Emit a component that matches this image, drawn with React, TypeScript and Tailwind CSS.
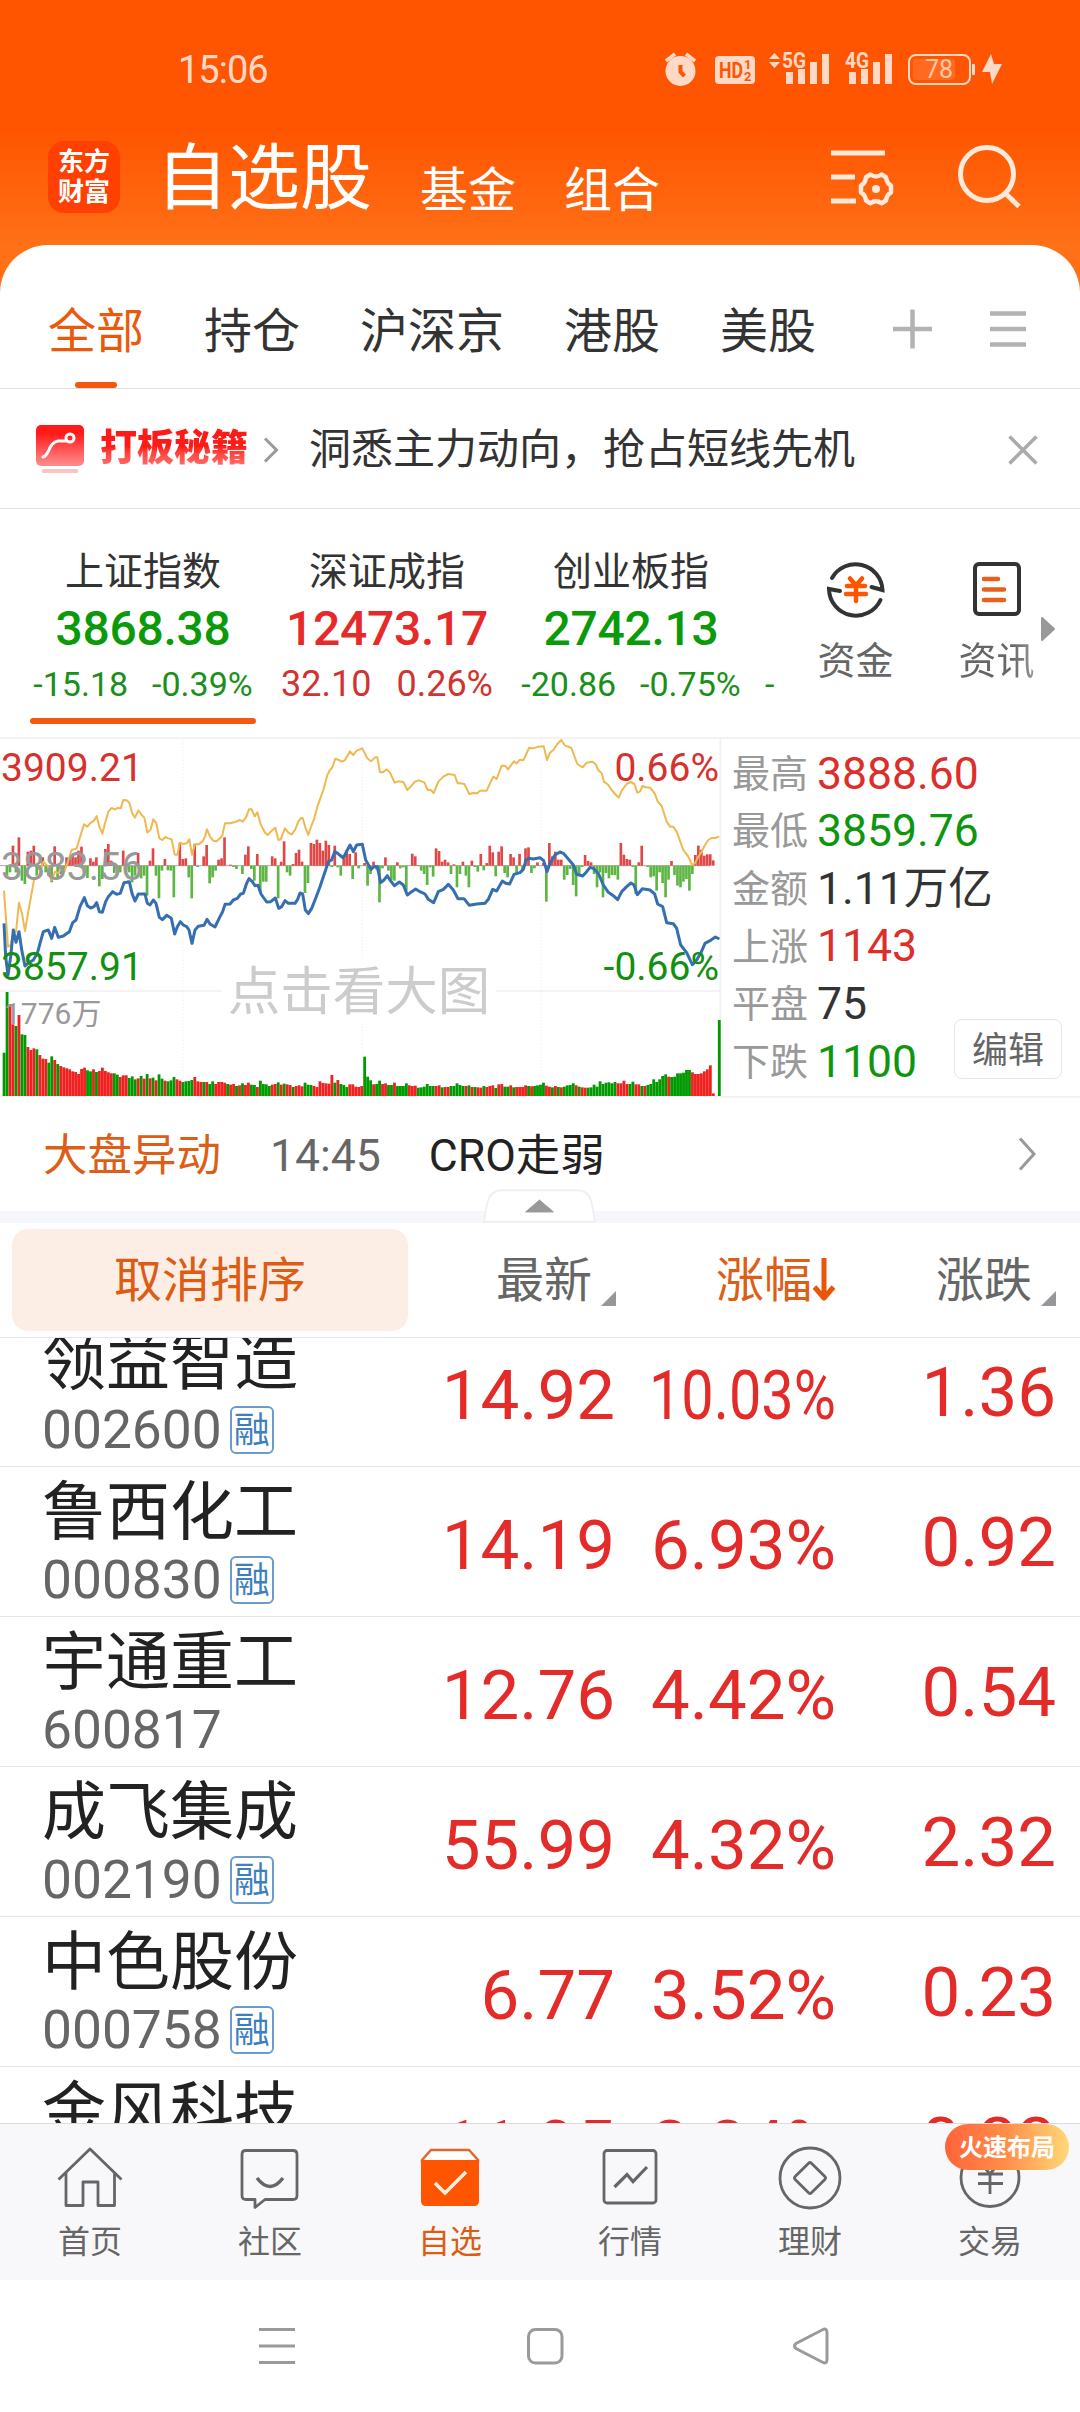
import type { ReactNode } from 'react';
import clsx from 'clsx';

type Stock = {
  name: string;
  code: string;
  margin?: boolean;
  price: string;
  percent: string;
  change: string;
};

const stocks: Stock[] = [
  { name: '领益智造', code: '002600', margin: true, price: '14.92', percent: '10.03%', change: '1.36' },
  { name: '鲁西化工', code: '000830', margin: true, price: '14.19', percent: '6.93%', change: '0.92' },
  { name: '宇通重工', code: '600817', price: '12.76', percent: '4.42%', change: '0.54' },
  { name: '成飞集成', code: '002190', margin: true, price: '55.99', percent: '4.32%', change: '2.32' },
  { name: '中色股份', code: '000758', margin: true, price: '6.77', percent: '3.52%', change: '0.23' },
  { name: '金风科技', code: '002202', margin: true, price: '11.95', percent: '2.84%', change: '0.33' },
];

const indices = [
  { name: '上证指数', value: '3868.38', diff: '-15.18', pct: '-0.39%', up: false, active: true },
  { name: '深证成指', value: '12473.17', diff: '32.10', pct: '0.26%', up: true, active: false },
  { name: '创业板指', value: '2742.13', diff: '-20.86', pct: '-0.75%', up: false, active: false },
];

const stats = [
  { label: '最高', value: '3888.60', color: 'text-[#dc2e2b]' },
  { label: '最低', value: '3859.76', color: 'text-[#0f960f]' },
  { label: '金额', value: '1.11万亿', color: 'text-[#333]' },
  { label: '上涨', value: '1143', color: 'text-[#dc2e2b]' },
  { label: '平盘', value: '75', color: 'text-[#333]' },
  { label: '下跌', value: '1100', color: 'text-[#0f960f]' },
];

// Minute bars round the zero line, up is positive
const momentum = [
  0, -30, -20, 60, -20, 85, -45, -55, 42, 45, 60, -30, -12, 25, -20, -30, -50, 58, -40, -25,
  -18, 25, 22, 30, 25, 45, 57, -20, -37, 22, 12, 25, -62, -40, 50, 65, 15, -22, -18, -20,
  45, -15, -20, -50, -30, 38, -38, -30, -90, 15, 52, -30, -98, -15, 20, -14, -15, -95, 0, 68,
  20, 22, -35, -98, 65, -4, 0, 28, 62, -53, -35, -15, 18, 22, 85, 0, 3, -4, -10, 0,
  -25, 33, 58, -10, -45, 35, -82, -48, -48, 0, 28, 22, -98, 12, 73, -20, -30, 5, 38, 48,
  12, -82, -52, 68, 65, 78, 68, 45, 75, 62, -4, 60, -5, -30, 20, 45, 35, -40, 40, -8,
  0, 8, -60, -25, 12, -12, -110, -8, 25, -15, -42, -45, 10, -8, -5, -75, 0, 36, 28, 2,
  -15, -25, -58, -5, -33, 52, 44, 12, 18, 10, -25, 4, -65, -25, 12, -30, -65, 15, -4, -18,
  35, -14, 8, 60, 40, -32, 42, 58, -22, -35, 35, 25, -22, 35, -15, 52, 55, -22, -8, 10,
  0, 8, -108, 68, 28, 42, 18, 18, -42, -28, -10, -58, -92, -30, -4, 32, 14, 10, -25, -65,
  -20, -95, -22, -38, -28, -28, -42, 68, 33, 20, 18, -4, -85, 10, 60, 0, -4, -35, -32, -75,
  -20, -52, -95, -42, 14, -28, -60, -65, -48, -40, -75, -25, 32, 60, 48, 30, 34, 34, 16,
];

// Volume per minute, negative values are drawn in green
const volume = [
  -130, -312, 275, 215, -210, 243, -185, -183, 147, 138, 143, -140, 123, 112, 111, -100, -119, 108, -96, 90,
  86, 83, 80, 74, 72, 66, 81, 85, -77, -74, 80, -72, 75, 85, 75, 71, 68, -68, -64, 57,
  62, 62, -54, -59, -50, 53, -60, 52, -66, 53, -55, 47, -65, -52, 46, -44, -47, -57, 50, 46,
  -42, -44, -45, -48, 57, 44, 42, -42, 42, -36, -44, 36, 42, 42, 40, -36, 34, 36, -30, 32,
  -38, 33, 40, -34, -33, 27, -46, -36, -35, -30, 34, 36, -41, 34, -37, 35, 33, -27, 30, 32,
  29, -40, -34, -33, 30, 27, 44, 39, 38, 37, 63, -40, 48, -36, -33, -27, 35, 35, 28, 27,
  30, -118, -58, -47, 35, -36, -46, 36, 38, -33, -33, 40, -30, -30, -30, -38, 32, 30, 31, -25,
  -26, -28, -36, -30, -30, 30, 32, -26, 27, 27, -30, -30, -38, -33, -30, 30, -32, 27, -27, 26,
  25, -30, 27, 30, 32, -24, 35, 36, -28, -28, 32, -26, 27, 27, 27, 32, -30, 29, -30, -32,
  -34, -40, 31, 28, -26, 30, -27, 26, -28, -32, -33, -38, 32, -28, 26, 25, -25, -26, -34, -28,
  -44, -36, -40, -41, -38, -42, 38, 38, 46, 36, -36, -43, 35, 35, -30, 30, -33, -36, -50, -42,
  -50, -60, -65, 58, -57, -58, -68, -68, -70, -78, -78, 71, 66, 66, 68, 74, 80, 92, 8, 0, -228,
];

const avgLine =
  '12,482 24,650 32,645 40,610 48,605 57,518 66,550 75,603 84,550 102,450 120,430 130,395 145,410 155,450 165,425 175,430 184,415 193,425 202,400 215,360 230,355 245,305 252,283 262,290 270,280 282,272 290,258 298,290 307,311 315,280 325,245 335,234 345,238 352,234 362,235 370,210 380,211 388,218 396,248 405,263 415,241 425,255 433,263 442,308 452,298 460,268 469,280 478,325 487,330 496,321 505,325 515,328 524,374 532,374 540,338 550,342 560,340 568,328 576,374 585,342 596,343 607,335 615,320 621,298 630,320 640,332 650,334 660,325 667,316 675,280 690,280 705,276 720,270 728,275 738,262 747,238 755,238 764,259 772,247 782,283 795,308 803,315 815,302 826,293 835,330 842,328 855,295 865,308 875,313 885,300 895,275 902,265 908,264 916,292 925,315 935,285 943,265 952,230 970,180 982,135 990,120 997,112 1006,86 1016,90 1027,95 1035,90 1050,64 1060,75 1070,62 1087,55 1102,85 1113,94 1125,82 1132,82 1140,127 1148,127 1160,118 1170,128 1184,158 1195,154 1210,156 1222,180 1232,170 1245,155 1255,151 1273,157 1283,180 1292,180 1301,189 1315,155 1330,140 1345,132 1364,135 1373,160 1382,160 1393,162 1408,192 1420,189 1432,190 1440,182 1460,182 1470,160 1480,140 1490,147 1505,107 1515,107 1524,118 1542,94 1550,100 1560,89 1570,91 1587,54 1600,55 1615,50 1631,49 1641,90 1650,68 1660,60 1672,42 1684,30 1694,46 1714,54 1722,75 1732,102 1748,112 1760,98 1777,95 1787,103 1795,120 1805,130 1812,155 1825,165 1835,180 1848,195 1856,203 1865,182 1880,162 1892,156 1903,162 1912,188 1920,185 1927,168 1938,172 1950,173 1964,190 1973,214 1985,228 2000,275 2010,290 2020,290 2030,305 2050,360 2065,380 2076,405 2085,400 2092,385 2102,370 2115,345 2125,330 2135,324 2145,324 2158,320';

const priceLine =
  '12,580 17,680 24,735 32,680 40,600 48,637 57,605 66,665 75,708 84,700 100,690 112,670 120,640 130,605 145,600 155,625 164,592 175,622 190,618 208,605 218,578 228,570 240,530 253,503 262,527 272,534 282,530 290,518 298,545 307,547 317,515 325,500 338,485 350,493 361,490 372,458 388,455 396,490 405,513 415,492 435,492 442,520 450,525 460,510 468,520 478,562 487,569 500,556 514,565 524,612 532,590 541,575 550,585 560,590 567,600 576,640 585,600 595,589 612,586 621,568 630,582 645,591 660,560 668,545 675,523 690,522 700,510 712,505 722,492 730,490 740,460 747,446 757,455 765,467 774,466 783,492 800,516 812,515 826,504 836,535 845,530 855,512 865,520 885,520 893,508 900,489 908,492 916,540 925,551 935,535 945,510 960,470 970,440 985,395 995,390 1004,365 1013,370 1030,384 1042,360 1050,345 1060,365 1070,345 1087,343 1097,390 1113,418 1122,410 1132,410 1142,458 1152,450 1162,437 1170,450 1183,467 1198,456 1210,465 1222,495 1235,485 1247,477 1260,485 1275,492 1285,508 1301,518 1315,485 1330,478 1345,463 1360,480 1374,506 1392,506 1408,526 1430,522 1455,520 1465,508 1478,478 1490,483 1507,453 1517,460 1529,462 1542,433 1560,428 1570,418 1578,390 1587,385 1600,387 1620,383 1631,392 1641,425 1650,400 1665,375 1680,366 1690,370 1705,387 1720,405 1730,433 1748,438 1760,425 1770,412 1780,415 1795,430 1810,465 1825,487 1840,497 1853,509 1865,485 1880,470 1893,459 1902,465 1912,494 1927,476 1950,480 1964,492 1973,522 1988,530 2000,578 2020,581 2030,595 2042,645 2060,668 2077,704 2090,690 2102,670 2115,640 2130,632 2146,621 2158,627';

function StatusBar() {
  return (
    <div className="flex h-[138px] items-start justify-between pr-[76px] pl-[178px] text-[#ffd9c6]">
      <span className="mt-[51px] text-[38px] leading-[38px] tracking-[-1px]">15:06</span>
      <svg className="mt-[48px]" width="340" height="40" viewBox="664 48 340 40" fill="currentColor">
        {/* alarm */}
        <circle cx="680.5" cy="71" r="15" />
        <path d="M666 61l9-7M695 61l-9-7" stroke="currentColor" strokeWidth="3.5" />
        <path d="M680.5 65v7l4 4" stroke="#ff5500" strokeWidth="4" fill="none" />
        {/* HD */}
        <rect x="715" y="56" width="40" height="28" rx="4" />
        <text x="719" y="78" fontSize="22" fontWeight="700" fill="#ff5500" textLength="24" lengthAdjust="spacingAndGlyphs">HD</text>
        <text x="744" y="69" fontSize="13" fontWeight="700" fill="#ff5500">1</text>
        <text x="744" y="81" fontSize="13" fontWeight="700" fill="#ff5500">2</text>
        {/* 5G */}
        <path d="M769 59l5.500-6 5.500 6zM769 62h11l-5.500 6z" />
        <text x="782" y="68" fontSize="22" fontWeight="700" textLength="24" lengthAdjust="spacingAndGlyphs">5G</text>
        <path d="M786 72h7v12h-7zM798 69h7v15h-7zM810 62h7v22h-7zM822 54h7v30h-7z" />
        {/* 4G */}
        <text x="845" y="68" fontSize="22" fontWeight="700" textLength="24" lengthAdjust="spacingAndGlyphs">4G</text>
        <path d="M849 72h7v12h-7zM861 69h7v15h-7zM873 62h7v22h-7zM885 54h7v30h-7z" />
        {/* battery */}
        <rect x="909" y="55" width="61" height="29" rx="7" fill="none" stroke="currentColor" strokeWidth="2" />
        <rect x="913" y="59" width="42" height="21" rx="3" fill="#ff6a20" />
        <text x="925" y="78" fontSize="25" textLength="28" fill="#ffc9a8">78</text>
        <rect x="972" y="64" width="3" height="11" rx="1" />
        <path d="M991 54l-9 18h8l2 12 10-20h-8z" />
      </svg>
    </div>
  );
}

function TitleBar() {
  return (
    <div className="flex h-[107px] items-start text-white">
      <div className="mt-[3px] ml-12 flex h-[72px] w-[72px] flex-col items-center justify-center rounded-2xl bg-[#ff4000] text-[26px] leading-[30px] font-bold">
        <span>东方</span>
        <span>财富</span>
      </div>
      <div className="ml-9 flex items-start gap-12">
        <span className="text-[72px] leading-[82px]">自选股</span>
        <span className="pt-[25px] text-[48px] leading-[56px]">基金</span>
        <span className="pt-[25px] text-[48px] leading-[56px]">组合</span>
      </div>
      <svg className="mt-[4px] ml-[168px]" width="202" height="72" viewBox="828 142 202 72" fill="none" stroke="#ffe9da" strokeWidth="5">
        <path d="M831 153h54M831 177h24M831 201h25" />
        <path
          d="M870.500 174.500q5.500 4 11 0l4.500 2.700q.8 6.300 5 8.300v7q-4.200 2-5 8l-4.500 2.700q-5.500-4-11 0l-4.500-2.700q-.8-6-5-8v-7q4.200-2 5-8.300z"
          strokeLinejoin="round"
          strokeWidth="4.500"
        />
        <circle cx="876" cy="189" r="4" fill="#ffe9da" stroke="none" />
        <circle cx="987" cy="174" r="26.500" />
        <path d="M1005 193l14 13.500" />
      </svg>
    </div>
  );
}

function GroupTabs() {
  return (
    <div className="flex h-[144px] items-center rounded-t-[48px] border-b border-[#dedede] bg-white pl-12 text-[48px] text-[#333]">
      <div className="flex h-full gap-[60px] leading-[173px]">
        <div className="flex h-full flex-col items-center justify-between text-[#ea5a0c]">
          <span className="h-[136px]">全部</span>
          <span className="h-[6px] w-[42px] shrink-0 rounded-full bg-[#f4580c]" />
        </div>
        <span>持仓</span>
        <span>沪深京</span>
        <span>港股</span>
        <span>美股</span>
      </div>
      <svg className="mt-6 ml-[77px]" width="133" height="40" viewBox="893 308 133 40" stroke="#b3b3b3" fill="none">
        <path d="M893 328h39M912.500 308.500v39" strokeWidth="4.500" />
        <path d="M990 312.500h36M990 328h36M990 343.500h36" strokeWidth="4.500" />
      </svg>
    </div>
  );
}

function Banner() {
  return (
    <div className="flex h-[120px] items-center border-b border-[#e0e0e0] bg-white pl-9">
      <svg width="48" height="50" viewBox="0 0 48 50" fill="none">
        <defs>
          <linearGradient id="promo" x1="0" y1="0" x2="0" y2="1">
            <stop offset="0.200" stopColor="#ff1a1a" />
            <stop offset="1" stopColor="#ff8f8f" />
          </linearGradient>
        </defs>
        <rect y="1" width="48" height="41" rx="5" fill="url(#promo)" />
        <rect x="6" y="45" width="36" height="4" rx="1" fill="#f9c4c4" />
        <path d="M7 33c7-2 5-14 15-16h8" stroke="#fff" strokeWidth="3" strokeLinecap="round" />
        <circle cx="34" cy="14" r="4" stroke="#fff" strokeWidth="3" />
      </svg>
      <span className="mt-px ml-4 bg-gradient-to-b from-[#ff1a1a] from-45% to-[#ff8080] bg-clip-text text-[37px] leading-[48px] font-black text-transparent">
        打板秘籍
      </span>
      <svg className="mt-[2px] ml-[15px]" width="16" height="26" viewBox="0 0 16 26" fill="none" stroke="#999" strokeWidth="3">
        <path d="M2 1.500l11.500 11.500L2 24.500" />
      </svg>
      <span className="mt-[3px] ml-[30px] text-[42px] leading-none text-[#333]">洞悉主力动向，抢占短线先机</span>
      <svg className="mt-[3px] ml-[153px]" width="30" height="30" viewBox="0 0 30 30" stroke="#aaa" strokeWidth="3.500">
        <path d="M1.500 1.500l27 27M28.500 1.500l-27 27" />
      </svg>
    </div>
  );
}

function IndexStrip() {
  return (
    <div className="flex h-[228px] bg-white">
      <div className="flex w-[775px] overflow-hidden pl-[21px]">
        {indices.map((item) => (
          <div key={item.name} className="flex w-[244px] shrink-0 flex-col items-center">
            <span className="mt-[42px] text-[39px] leading-[42px] text-[#333]">{item.name}</span>
            <span
              className={clsx(
                'mt-[11px] text-[48px] leading-[50px] font-medium tracking-[-0.3px]',
                item.up ? 'text-[#e62a2a]' : 'text-[#0a9a0a]'
              )}
            >
              {item.value}
            </span>
            <span
              className={clsx(
                'mt-[10px] flex leading-[40px] whitespace-nowrap',
                item.up ? 'gap-[25px] text-[36px] text-[#cf3431]' : 'gap-6 text-[34px] text-[#1a8f1a]'
              )}
            >
              <span>{item.diff}</span>
              <span>{item.pct}</span>
            </span>
            {item.active && <span className="mt-[14px] h-[6px] w-[226px] rounded-full bg-[#f2590f]" />}
          </div>
        ))}
        <span className="mt-[155px] ml-[12px] text-[34px] leading-[40px] text-[#1a8f1a]">-</span>
      </div>
      <div className="flex pl-[10px] text-[38px] leading-[42px] text-[#666]">
        <div className="flex w-[141px] flex-col items-center pt-[49px]">
          <svg width="62" height="62" viewBox="825 559 62 62" fill="none" stroke="#333" strokeWidth="4">
            <path d="M832 579a27 27 0 0 1 50.500 12l-11-3" strokeLinecap="round" />
            <path d="M880.500 601a27 27 0 0 1-51.500-11l11 2" strokeLinecap="round" />
            <path d="M850 579.500l6 7 6-7M847 587h18M846 595h20M856 587v15" stroke="#ff5500" strokeLinecap="round" strokeWidth="4.500" />
          </svg>
          <span className="mt-[20px]">资金</span>
        </div>
        <div className="flex w-[141px] flex-col items-center pt-[49px]">
          <svg width="62" height="62" viewBox="966 559 62 62" fill="none" stroke="#333" strokeWidth="4">
            <rect x="975" y="565" width="44" height="50" rx="4" />
            <path d="M984 580h14M984 590.500h20M984 601h20" stroke="#e8601c" strokeLinecap="round" strokeWidth="4.500" />
          </svg>
          <span className="mt-[20px] bg-gradient-to-r from-[#666] from-70% to-[#999] bg-clip-text text-transparent">资讯</span>
        </div>
      </div>
      <svg className="mt-[107px] -ml-[27px]" width="16" height="26" viewBox="0 0 16 26" fill="#999" stroke="#999" strokeWidth="2" strokeLinejoin="round">
        <path d="M2 2v22l12-11z" />
      </svg>
    </div>
  );
}

function MinuteChart() {
  return (
    <div className="relative h-[361px] w-[722px] text-[39px] leading-[40px]">
      {/* one unit is a third of a pixel */}
      <svg className="block" width="722" height="361" viewBox="0 21 2166 1083" fill="none">
        <path d="M0 24H2166M0 783H2160M0 1099H2166M2161 24V1099" stroke="#f0f0f0" strokeWidth="5" />
        <path d="M549 30V1095M1086 30V1095M1624 30V1095" stroke="#eee" strokeWidth="3" strokeDasharray="4 6" />
        {volume.map((v, i) => (
          <rect key={i} x={8 + i * 8.94} y={1098 - Math.abs(v)} width="8.500" height={Math.abs(v)} fill={v > 0 ? '#ef2222' : '#009a00'} />
        ))}
        <path d="M0 407H2130" stroke="#8b7b6b" strokeWidth="2" />
        {momentum.map((v, i) => (
          <rect key={i} x={8 + i * 8.94} y={v > 0 ? 407 - v : 407} width="8" height={Math.abs(v)} fill={v > 0 ? '#e04848' : '#5db543'} />
        ))}
        <polyline points={avgLine} stroke="#efb850" strokeWidth="6" strokeLinejoin="round" />
        <polyline points={priceLine} stroke="#356fb0" strokeWidth="9" strokeLinejoin="round" />
      </svg>
      <span className="absolute top-[11px] left-[1px] text-[#d8302d]">3909.21</span>
      <span className="absolute top-[110px] left-[1px] text-[#999]">3883.56</span>
      <span className="absolute top-[210px] left-[1px] text-[#12900f]">3857.91</span>
      <span className="absolute top-[11px] right-[3px] text-[#d8302d]">0.66%</span>
      <span className="absolute top-[210px] right-[3px] text-[#12900f]">-0.66%</span>
      <span className="absolute top-[257px] left-[4px] text-[30px] text-[#999]">1776万</span>
      <span className="absolute top-[223px] left-[222px] w-[274px] bg-white text-center text-[52.500px] leading-[64px] text-[#ccc]">
        点击看大图
      </span>
    </div>
  );
}

function StatsPanel() {
  return (
    <div className="relative flex-1 border-y-2 border-[#f2f2f2] pl-[10px]">
      {stats.map((s) => (
        <div key={s.label} className="flex h-[57.600px] items-center">
          <span className="w-[85px] pt-[12px] text-[38px] leading-none text-[#999]">{s.label}</span>
          <span className={clsx('pt-[12px] text-[44.500px] leading-none', s.color)}>{s.value}</span>
        </div>
      ))}
      <button className="absolute right-[18px] bottom-[17px] h-[60px] w-[108px] rounded-lg border border-[#e6e6e6] bg-white pt-[4px] text-[36px] leading-none text-[#666]">
        编辑
      </button>
    </div>
  );
}

function MarketAlert() {
  return (
    <div className="relative flex h-[125px] items-start border-b-[12px] border-[#f6f7fa] bg-white pl-[43px] text-[44px] leading-[52px]">
      <span className="mt-[32px] text-[44.500px] text-[#dd5f17]">大盘异动</span>
      <span className="mt-[32px] ml-[49px] text-[44.500px] text-[#666]">14:45</span>
      <span className="mt-[32px] ml-[48px] text-[44.500px] text-[#222]">CRO走弱</span>
      <svg className="absolute top-[39px] right-[43px]" width="19" height="34" viewBox="0 0 19 34" fill="none" stroke="#999" strokeWidth="3">
        <path d="M2 1.500l14 15.500L2 32.500" />
      </svg>
      <svg className="absolute top-[91px] left-[483px]" width="113" height="34" viewBox="0 0 114 34">
        <path d="M1 33C4 15 4 1 19 1h76c15 0 15 14 18 32z" fill="#fff" stroke="#f0f0f0" strokeWidth="2" />
        <path d="M43 23l14-12 14 12z" fill="#999" stroke="#999" strokeLinejoin="round" />
      </svg>
    </div>
  );
}

function SortTriangle() {
  return (
    <svg className="mt-9" width="15" height="15" viewBox="0 0 15 15" fill="#97979b">
      <path d="M15 0v15H0z" />
    </svg>
  );
}

function ListHeader() {
  return (
    <div className="flex h-[115px] items-center border-b border-[#e4e4e4] bg-white pl-3 text-[48px] leading-none whitespace-nowrap text-[#666]">
      <button className="h-[102px] w-[396px] rounded-2xl bg-[#fdeee5] pt-[2px] text-[#dc5c14]">取消排序</button>
      <div className="ml-[88px] flex w-[120px] items-center justify-between">
        <span className="pt-[2px]">最新</span>
        <SortTriangle />
      </div>
      <div className="ml-[100px] flex w-[120px] items-center text-[#dd5f17]">
        <span className="pt-[2px]">涨幅</span>
        <svg className="shrink-0" width="24" height="46" viewBox="0 0 24 46" fill="none" stroke="#e8560a" strokeWidth="5">
          <path d="M12 1v40M2.500 30L12 41l9.500-11" strokeLinejoin="round" />
        </svg>
      </div>
      <div className="ml-[100px] flex w-[120px] items-center justify-between">
        <span className="pt-[2px]">涨跌</span>
        <SortTriangle />
      </div>
    </div>
  );
}

function StockRow({ stock }: { stock: Stock }) {
  return (
    <div className="flex h-[150px] shrink-0 border-b border-[#e6e6e6] text-[69px] leading-[80px] text-[#e32b29]">
      <div className="w-[394px] pt-[14px] pl-[42px]">
        <p className="text-[64px] leading-[64px] text-[#222]">{stock.name}</p>
        <div className="mt-[9px] flex h-[52px] items-center text-[53.300px] leading-[52px] text-[#666]">
          {stock.code}
          {stock.margin && (
            <span className="ml-[8px] h-[48px] w-[44px] rounded-md border-2 border-[#6b9bcb] text-center text-[36px] leading-[46px] text-[#3f7fc0]">
              融
            </span>
          )}
        </div>
      </div>
      <span className="w-[221px] pt-[39px] text-right">{stock.price}</span>
      <span className="flex w-[221px] justify-end pt-[39px]">
        <span className={clsx('origin-right', stock.percent.length > 5 && 'scale-x-[0.835]')}>{stock.percent}</span>
      </span>
      <span className="w-[220px] pt-[36px] text-right">{stock.change}</span>
    </div>
  );
}

function NavItem({ label, active, children }: { label: string; active?: boolean; children: ReactNode }) {
  return (
    <div className={clsx('flex w-[180px] flex-col items-center', active ? 'text-[#dc5c14]' : 'text-[#666]')}>
      <svg className="mt-[21px]" width="66" height="66" viewBox="0 0 66 66" fill="none" stroke="#666" strokeWidth="2.800">
        {children}
      </svg>
      <span className="mt-[13px] text-[32px] leading-[36px]">{label}</span>
    </div>
  );
}

function BottomNav() {
  return (
    <div className="relative flex h-[157px] shrink-0 border-t border-[#dcdcdc] bg-[#f8f8fa]">
      <NavItem label="首页">
        <path d="M1.500 34.500L33 4l31.500 30.500M9 28v32.500h17V37h15v23.500h16.500V28" strokeLinejoin="round" />
      </NavItem>
      <NavItem label="社区">
        <path d="M8 5.500h48q4 0 4 4v41q0 4-4 4H28l-10 8v-8h-9q-4 0-4-4v-41q0-4 4-4z" strokeLinejoin="round" />
        <path d="M20 33q13 17 26 0" strokeWidth="3.500" />
      </NavItem>
      <NavItem label="自选" active>
        <path d="M5 15l9-10h38l9 10v2H5z" stroke="#dd6a2c" fill="#fff" strokeWidth="2.500" />
        <path d="M4 15h58v41q0 5-5 5H9q-5 0-5-5z" fill="#ff5500" stroke="none" />
        <path d="M18 38l10 10 21-21" stroke="#fff0dc" strokeWidth="3.500" />
      </NavItem>
      <NavItem label="行情">
        <rect x="7" y="5.500" width="52" height="52.500" rx="3" />
        <path d="M17.500 42L30 29.500l6 7L50 22" strokeWidth="3.200" />
      </NavItem>
      <NavItem label="理财">
        <circle cx="33" cy="33" r="30" />
        <rect x="21.500" y="21.500" width="23" height="23" rx="2" transform="rotate(45 33 33)" />
      </NavItem>
      <NavItem label="交易">
        <circle cx="33" cy="32.500" r="29" />
        <path d="M23 17l10 12 10-12M21 29h25M21 38.500h25M33 29v20" />
      </NavItem>
      <span className="absolute top-0 left-[945px] h-[46px] w-[124px] rounded-full bg-gradient-to-r from-[#ff6238] via-[#ff8f4a] to-[#ffd877] text-center text-[24px] leading-[48px] font-bold text-white">
        火速布局
      </span>
    </div>
  );
}

function SystemBar() {
  return (
    <div className="flex flex-1 items-start bg-white pt-[46px] pl-[259px]">
      <svg width="570" height="40" viewBox="259 2326 570 40" fill="none" stroke="#9a9a9a" strokeWidth="3">
        <path d="M259 2329.500h36M259 2346h36M259 2362.500h36" />
        <rect x="528.500" y="2329.500" width="33.500" height="33.500" rx="7" />
        <path d="M823 2329.500q4-1.500 4 3v27q0 4.500-4 3l-27-14q-3-2.500 0-5z" />
      </svg>
    </div>
  );
}

export default function App() {
  return (
    <div className="flex h-[2412px] w-[1080px] flex-col overflow-hidden bg-white [font-family:Roboto,'Noto_Sans_CJK_SC',sans-serif]">
      <div className="bg-[linear-gradient(to_bottom,#ff5500_130px,#ff7017_245px)]">
        <StatusBar />
        <TitleBar />
        <GroupTabs />
      </div>
      <Banner />
      <IndexStrip />
      <div className="flex h-[361px] bg-white">
        <MinuteChart />
        <StatsPanel />
      </div>
      <MarketAlert />
      <ListHeader />
      <div className="flex h-[785px] shrink-0 flex-col justify-start overflow-hidden bg-white">
        <div className="-mt-[21px]">
          {stocks.map((stock) => (
            <StockRow key={stock.code} stock={stock} />
          ))}
        </div>
      </div>
      <BottomNav />
      <SystemBar />
    </div>
  );
}
